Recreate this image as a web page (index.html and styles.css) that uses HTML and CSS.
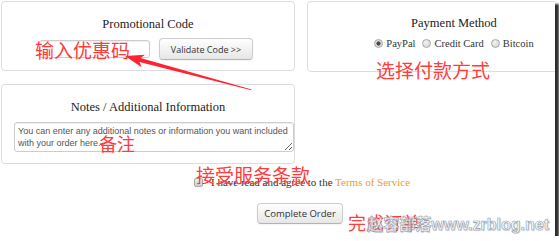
FILE: index.html
```html
<!DOCTYPE html>
<html lang="zh-CN">
<head>
    <meta charset="UTF-8">
    <meta name="viewport" content="width=device-width, initial-scale=1.0">
    <title>Checkout</title>
    <link rel="stylesheet" href="styles.css">
</head>
<body>
    <div class="shot">
        <div class="top-row">
            <section class="panel promo">
                <h3 class="panel-title">Promotional Code</h3>
                <div class="promo-row">
                    <input class="promo-input" type="text">
                    <button class="btn">Validate Code &gt;&gt;</button>
                </div>
            </section>
            <section class="panel payment">
                <h3 class="panel-title">Payment Method</h3>
                <div class="radio-row">
                    <label class="radio-item"><input type="radio" name="pay" checked> PayPal</label>
                    <label class="radio-item"><input type="radio" name="pay"> Credit Card</label>
                    <label class="radio-item"><input type="radio" name="pay"> Bitcoin</label>
                </div>
            </section>
        </div>
        <section class="panel notes">
            <h3 class="panel-title">Notes / Additional Information</h3>
            <textarea class="notes-text">You can enter any additional notes or information you want included with your order here...</textarea>
        </section>
        <div class="terms">
            <input type="checkbox" class="terms-check">
            <span>I have read and agree to the <a href="#" class="terms-link">Terms of Service</a></span>
        </div>
        <div class="submit-row">
            <button class="btn btn-submit">Complete Order</button>
        </div>

        <!-- 标注 -->
        <svg class="arrow" width="555" height="236" viewBox="0 0 555 236">
            <g transform="translate(125,56) rotate(15)">
                <polygon points="0,0 19,-6.5 15.5,-2 131,-0.4 131,0.4 15.5,2 19,6.5" fill="#f23"/>
            </g>
        </svg>
        <span class="note note-promo">输入优惠码</span>
        <span class="note note-pay">选择付款方式</span>
        <span class="note note-notes">备注</span>
        <span class="note note-terms">接受服务条款</span>
        <span class="note note-submit">完成订单</span>
        <span class="watermark">赵容部落www.zrblog.net</span>
    </div>
</body>
</html>
```

FILE: styles.css
```css
* { box-sizing: border-box; }
body {
    margin: 0;
    background: #fff;
}
.shot {
    position: relative;
    width: 555px;
    height: 236px;
    padding: 1px 0 0 1px;
    background: #fff;
    overflow: hidden;
    box-shadow: 4px 4px 2px rgba(0, 0, 0, 0.82);
}
.top-row {
    display: flex;
    align-items: flex-start;
    gap: 12px;
}
.panel {
    width: 294px;
    flex: none;
    border: 1px solid #dcdcdc;
    border-radius: 4px;
    padding: 15px 0 0 0;
}
.promo { height: 70px; }
.payment { height: 71px; padding-top: 14px; }
.panel-title {
    margin: 0;
    font-family: 'Liberation Serif', serif;
    font-size: 12.5px;
    font-weight: normal;
    line-height: 14px;
    text-align: center;
    color: #222;
}
.promo-row {
    display: flex;
    justify-content: center;
    align-items: center;
    gap: 9px;
    margin-top: 7px;
}
.promo-input {
    width: 111px;
    height: 18px;
    margin: 0 0 0 -4px;
    border: 1px solid #ccc;
    border-radius: 3px;
    box-shadow: inset 0 1px 1px rgba(0,0,0,0.07);
    background: #fff;
}
.btn {
    font-family: 'Open Sans', 'Liberation Sans', sans-serif;
    font-size: 9px;
    color: #333;
    height: 22px;
    padding: 0 10px;
    border: 1px solid #ccc;
    border-bottom-color: #b3b3b3;
    border-radius: 4px;
    background: linear-gradient(#fff, #e6e6e6);
    box-shadow: inset 0 1px 0 rgba(255,255,255,0.2), 0 1px 2px rgba(0,0,0,0.05);
}
.promo-row .btn { width: 94px; padding: 0; }
.radio-row {
    display: flex;
    justify-content: center;
    align-items: center;
    gap: 7px;
    margin-top: 7px;
    height: 12px;
    font-family: 'Liberation Serif', serif;
    font-size: 10.5px;
    color: #333;
}
.radio-item {
    display: flex;
    align-items: center;
    gap: 3px;
}
.radio-item input {
    appearance: none;
    width: 9px;
    height: 9px;
    margin: 0;
    border: 1px solid #a8a8a8;
    border-radius: 50%;
    background: radial-gradient(circle at 40% 35%, #f4f4f4, #cfcfcf);
}
.radio-item input:checked {
    background: radial-gradient(circle, #4a4a4a 0 1.8px, #e2e2e2 2.4px, #cfcfcf);
}
.notes {
    margin-top: 12px;
    height: 80px;
    padding: 15px 0 0 12px;
}
.notes .panel-title { padding-right: 12px; }
.notes-text {
    display: block;
    width: 280px;
    height: 30px;
    margin: 8px 0 0 0;
    padding: 3px 3px 0 3px;
    border: 1px solid #ccc;
    border-radius: 3px;
    font-family: 'Liberation Sans', sans-serif;
    font-size: 9px;
    line-height: 11.5px;
    color: #555;
    resize: vertical;
    overflow: hidden;
    box-shadow: inset 0 1px 1px rgba(0,0,0,0.07);
}
.terms {
    display: flex;
    align-items: center;
    gap: 8px;
    height: 12px;
    margin-top: 12px;
    padding-left: 193px;
    font-family: 'Liberation Serif', serif;
    font-size: 11px;
    color: #333;
}
.terms-check {
    appearance: none;
    width: 9px;
    height: 9px;
    margin: 0;
    border: 1px solid #aaa;
    border-radius: 2px;
    background: linear-gradient(#eee, #cfcfcf);
}
.terms-link {
    color: #f39a2b;
    text-decoration: none;
}
.submit-row {
    margin-top: 15px;
    padding-left: 256px;
}
.btn-submit {
    width: 86px;
    height: 21px;
    padding: 0;
    font-size: 9.5px;
}
.arrow {
    position: absolute;
    left: 0;
    top: 0;
    pointer-events: none;
}
.note {
    position: absolute;
    font-family: 'Noto Sans CJK SC', sans-serif;
    font-size: 19px;
    line-height: 19px;
    color: #ff3b3b;
    white-space: nowrap;
    pointer-events: none;
}
.note-promo { left: 35px; top: 40px; }
.note-pay { left: 376px; top: 60px; }
.note-notes { left: 99px; top: 134px; font-size: 18px; }
.note-terms { left: 196px; top: 165px; }
.note-submit { left: 348px; top: 213px; font-size: 18px; }
.watermark {
    position: absolute;
    right: 6px;
    top: 216px;
    font-family: 'Liberation Sans', 'Noto Sans CJK SC', sans-serif;
    font-size: 16px;
    font-weight: bold;
    line-height: 18px;
    color: rgba(255, 255, 255, 0.7);
    -webkit-text-stroke: 0.6px #8e9aab;
    text-shadow: 1px 1px 1px rgba(140, 150, 170, 0.35);
    white-space: nowrap;
    pointer-events: none;
}
```
